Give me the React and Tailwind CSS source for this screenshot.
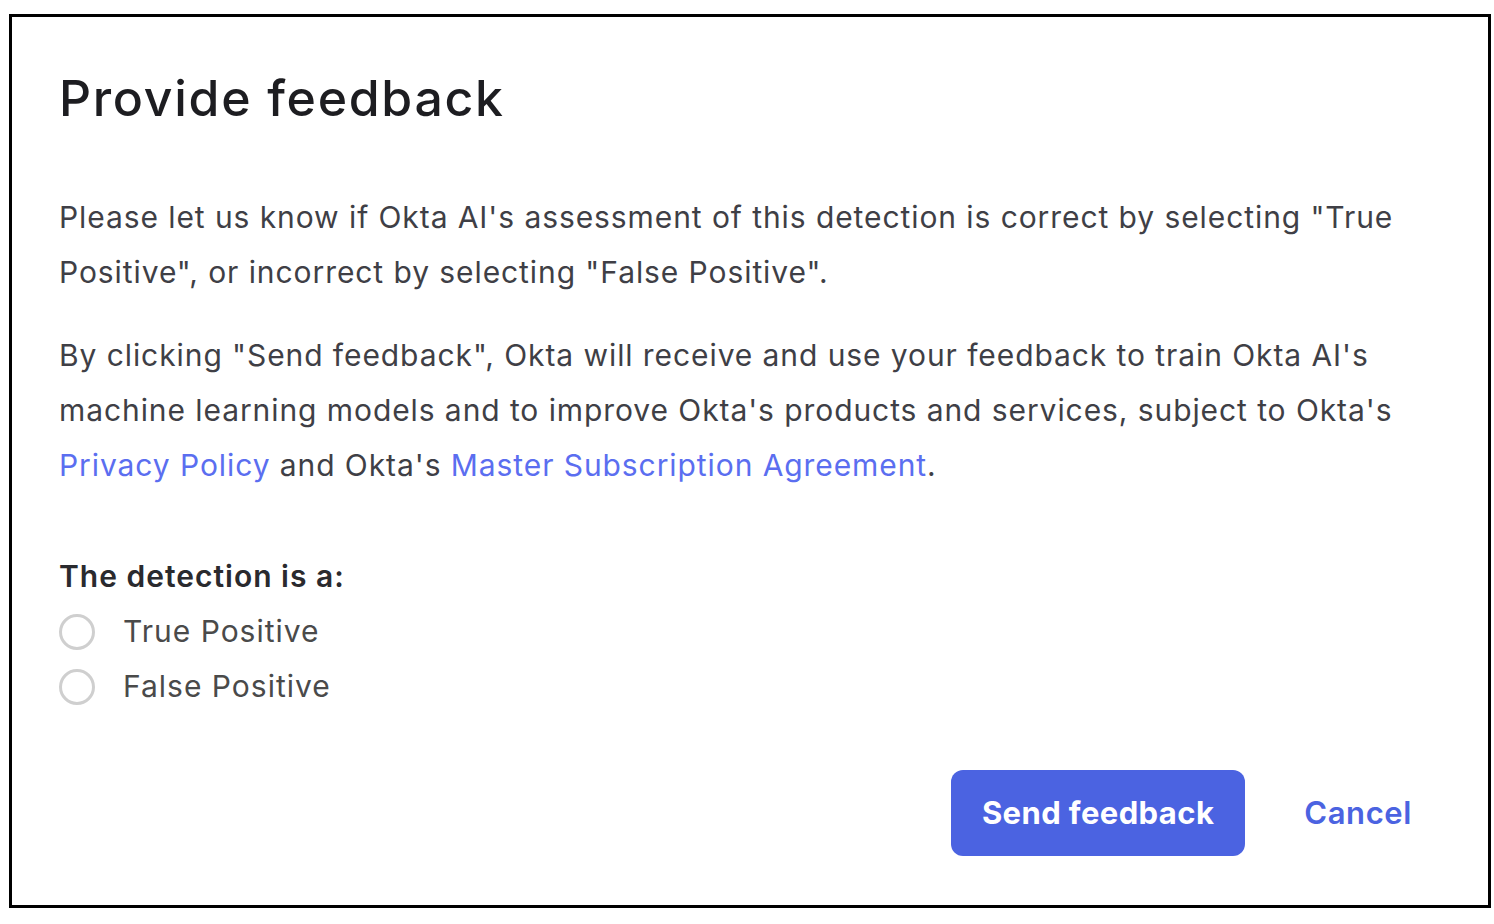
const FONT = { fontFamily: "Inter, 'Noto Sans', sans-serif" };

function Radio({ label }) {
  return (
    <label className="flex items-center h-[55px]">
      <span className="w-[36px] h-[36px] rounded-full border-[3px] border-[#cfcfcf] bg-white shrink-0" />
      <span className="ml-[28px] text-[30px] tracking-[1px] text-[#4a4a4a]">{label}</span>
    </label>
  );
}

export default function App() {
  return (
    <div className="w-[1494px] h-[924px] bg-white pt-[14px] pl-[9px]" style={FONT}>
      <div className="w-[1482px] h-[894px] border-[3px] border-black flex flex-col pl-[47px] pr-[76px] pt-[51px]">
        <h2 className="text-[50px] leading-[60px] font-medium text-[#1d1d21] tracking-[1.7px]">
          Provide feedback
        </h2>

        <p className="mt-[62px] text-[30px] leading-[55px] tracking-[0.92px] text-[#3f3f46]">
          Please let us know if Okta AI's assessment of this detection is correct by selecting "True
          Positive", or incorrect by selecting "False Positive".
        </p>
        <p className="mt-[28px] text-[30px] leading-[55px] tracking-[0.92px] text-[#3f3f46]">
          By clicking "Send feedback", Okta will receive and use your feedback to train Okta AI's
          machine learning models and to improve Okta's products and services, subject to Okta's{" "}
          <a className="text-[#5b6ef0]">Privacy Policy</a> and Okta's{" "}
          <a className="text-[#5b6ef0]">Master Subscription Agreement</a>.
        </p>

        <fieldset className="mt-[56px]">
          <legend className="text-[30px] leading-[55px] font-semibold tracking-[1px] text-[#2a2a2e]">
            The detection is a:
          </legend>
          <Radio label="True Positive" />
          <Radio label="False Positive" />
        </fieldset>

        <div className="mt-[56px] flex items-center justify-end gap-[59px]">
          <button className="h-[86px] px-[31px] rounded-[12px] bg-[#4b63e1] text-white text-[31px] font-bold tracking-[0.4px]">
            Send feedback
          </button>
          <button className="text-[31px] font-semibold tracking-[0.6px] text-[#4b63e1]">Cancel</button>
        </div>
      </div>
    </div>
  );
}
